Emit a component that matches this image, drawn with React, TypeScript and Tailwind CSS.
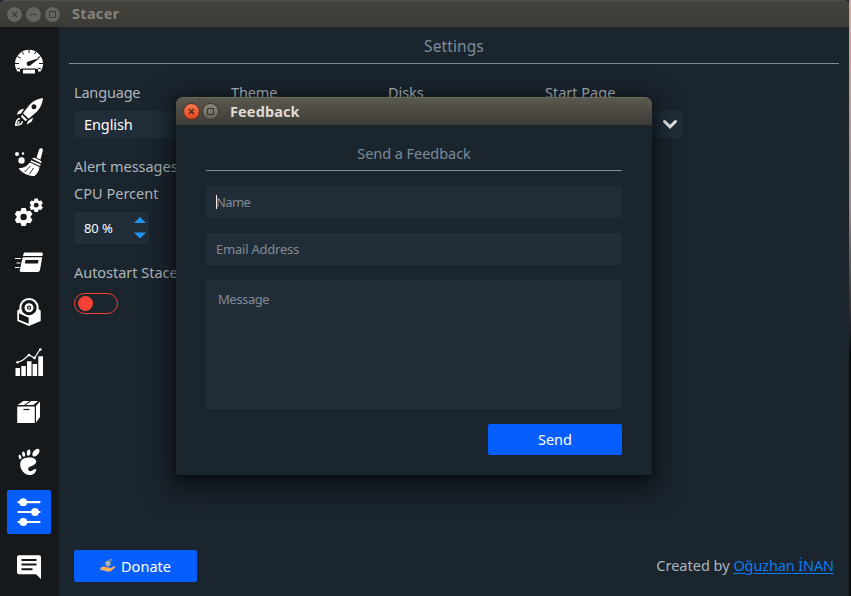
import type { ReactNode } from "react";

function Icon({ children }: { children: ReactNode }) {
  return (
    <svg viewBox="0 0 28 28" className="h-7 w-7" fill="#fff">
      {children}
    </svg>
  );
}

function Gear({ transform }: { transform: string }) {
  return (
    <g transform={transform}>
      {[0, 60, 120].map((a) => (
        <path key={a} transform={`rotate(${a})`} d="M-2.100-9h4.200l1 3v12l-1 3h-4.200l-1-3V-6z" />
      ))}
      <circle r="6.500" />
      <circle r="3.200" fill="#15191c" />
    </g>
  );
}

const icons: ReactNode[] = [
  <Icon>
    <path d="M5 23.500H2.500C.8 21 0 18.700 0 15.800a14 14 0 0 1 28 0c0 3-.8 5.200-2.500 7.700H23V21H5z" />
    <path d="M14 1v4M7 3.500l1.800 3M21 3.500l-1.500 2.500M2.500 8.300l3.200 1.900M25.500 8.300L23 9.800M0 15.500h4M28 15.500h-4M2 21l3-1M26 21l-3-1" stroke="#15191c" strokeWidth="1" />
    <path d="M25 9.700L15.800 17a2.300 2.300 0 1 1-2.400-3.600z" fill="#15191c" />
    <path d="M6.500 20.500h15v1h-15z" fill="#15191c" />
    <path d="M8 21.700h12v3.800H8z" />
  </Icon>,
  <Icon>
    <path fillRule="evenodd" d="M28 0c-.5 6-3 11-8 15.300l-6.300 5.400L8 15.200l5-6.500C17 3.500 22 .8 28 0zM19 6.300a2.500 2.500 0 1 0 0 5 2.500 2.500 0 0 0 0-5z" />
    <path d="M7 16.500l5.500 5.500-2.300 1L6 18.800zM9 11l-3 4.500-4 1.300c.8-3.500 3-6 7-5.800zM18 19.500l-1 3.700-4.800 3.200c-.3-1.600.4-3 1.500-4z" />
    <path d="M5 20.500c-3 .4-4.200 3-4.200 6.700 3.700 0 6.500-1 6.500-3.900M4.500 23.500l-2 2" fill="none" stroke="#fff" strokeWidth="1.500" />
  </Icon>,
  <Icon>
    <circle cx="2" cy="6" r="2" /><circle cx="8" cy="5.500" r="1.200" /><circle cx="6.500" cy="12.500" r="3.200" />
    <path d="M24.200 1.300c1-2 4-1.300 3.700 1L25.500 11.500l-4-1.700zM17.200 10.800c.8-1.300 1.700-1.300 2.800-.8l5.300 2.400c1.200.6 1.500 1.500.9 2.800zM16.200 12.200l9.600 4.400-.7 1.500-9.600-4.400zM14.800 14.600l9.700 4.500c-.5 4.200-2.300 6.900-5 8.900C13 28 7 25 3.500 20.200c4.500.3 8.300-1.700 11.300-5.600z" />
    <path d="M15.500 18l-6 6M18.500 20l-4 6" stroke="#15191c" strokeWidth=".9" />
  </Icon>,
  <Icon>
    <Gear transform="translate(8.600 19)" />
    <Gear transform="translate(21.200 7.200) scale(.75)" />
  </Icon>,
  <Icon>
    <path d="M10 4.500h16.500c1 0 1.500.8 1.300 1.700l-.4 1.800H8l.5-2c.2-1 .6-1.500 1.500-1.500z" />
    <path fillRule="evenodd" d="M7.700 9.300h19.500L25 22c-.3 1.200-1.200 2-2.500 2h-16c-1.300 0-2-.9-1.700-2zM10.500 12l-.7 3.500H23l.6-3.500z" />
    <path d="M0 10.500h6M1.500 15h4M0 19.500h4.500" stroke="#fff" strokeWidth="1.200" />
  </Icon>,
  <Icon>
    <path d="M2.300 12.500l2.700-1.700L14 18l9-7.200 2.700 1.700V23L14 28 2.300 23z" />
    <circle cx="14" cy="9.700" r="9.700" />
    <circle cx="14" cy="9.700" r="7.600" fill="#15191c" />
    <circle cx="14" cy="9.700" r="3.300" fill="none" stroke="#fff" strokeWidth="2.400" />
    <circle cx="14" cy="9.700" r=".9" />
    <path d="M4 15l9.700 4.200v6.500L4 21.700z" fill="#15191c" />
    <path d="M3 14.300l11 4.700 11-4.700" stroke="#fff" strokeWidth="1.200" fill="none" />
  </Icon>,
  <Icon>
    <path d="M.5 20H5v8H.5zM6.300 18h4.500v10H6.300zM12 13.300h4.500V28H12zM17.600 16h4.500v12h-4.500zM23.300 8.300H28V28h-4.700z" />
    <path d="M2.500 14.500L8 12l6-5 5.500 3L25 1.500" fill="none" stroke="#fff" strokeWidth="1.200" />
    <circle cx="2.500" cy="14.300" r="1.200" /><circle cx="14" cy="7" r="1.300" /><circle cx="19.500" cy="10" r="1.300" /><circle cx="25.300" cy="1.500" r="1.300" />
  </Icon>,
  <Icon>
    <path d="M8.500 3h6L9 7H2.500zM16.500 3h6.700l-5 4h-7.700zM2.200 8.500h17.600V25H2.200zM21 8l4-4.500V19l-4 5.500z" />
    <path d="M8.500 11.500h6" stroke="#15191c" strokeWidth="1.200" />
  </Icon>,
  <Icon>
    <path d="M21.500 1c4.700-1.200 3.800 5-1.500 7.500-4 .7-3.500-5 1.500-7.500z" />
    <ellipse cx="13.600" cy="4.700" rx="1.800" ry="3.100" transform="rotate(7 13.600 4.700)" />
    <ellipse cx="8.600" cy="6.200" rx="1.500" ry="2.700" transform="rotate(-12 8.600 6.200)" />
    <ellipse cx="5" cy="9" rx="1.300" ry="2.300" transform="rotate(-18 5 9)" />
    <path d="M13 9.500c6-.7 9.500 2 7.800 5.500-1.500 3-6.800 3-7.500 5.300-.7 3 2.700 4 5.200 1.200l3-.5c-.8 4.500-3.600 6-7 6C9 27 4.800 21 5.200 15.800c.3-3.800 3.100-5.900 7.800-6.300z" />
  </Icon>,
  <Icon>
    <path d="M3.500 4.200h21M3.500 14h21M3.500 24h21" stroke="#fff" strokeWidth="2.200" strokeLinecap="round" />
    <circle cx="8.300" cy="4.200" r="3.900" /><circle cx="20" cy="14" r="3.900" /><circle cx="8.300" cy="24" r="3.900" />
  </Icon>,
  <Icon>
    <path d="M4 2.300h20c1.300 0 2 .9 2 2.200v21.500L21 21.300H4c-1.200 0-2-.9-2-2v-15c0-1.300.8-2 2-2z" />
    <path d="M6.500 7H21.500M6.500 11.500H21.500M6.500 16.300H17.500" stroke="#15191c" strokeWidth="2" />
  </Icon>,
];

const columns = [
  { label: "Language", value: "English", track: "tracking-[-0.18px]" },
  { label: "Theme", value: "", track: "tracking-[-0.15px]" },
  { label: "Disks", value: "", track: "tracking-[-0.05px]" },
  { label: "Start Page", value: "", track: "tracking-[0px]" },
];

function WindowButton({ kind, tone }: { kind: "close" | "min" | "max"; tone: "dim" | "red" | "gray" }) {
  const colors = {
    dim: "border-[#383732] bg-[#65645e] text-[#3b3a35]",
    gray: "border-[#38352f] bg-linear-to-b from-[#8b8880] to-[#65625a] text-[#33312c]",
    red: "border-[#552d22] bg-linear-to-b from-[#f4764d] to-[#df481b] text-[#502214]",
  };
  return (
    <span className={`flex h-[17px] w-[17px] items-center justify-center rounded-full border ${colors[tone]}`}>
      <svg viewBox="0 0 11 11" className="h-[11px] w-[11px]" fill="none" stroke="currentColor">
        {kind === "close" && <path d="M3 3l5 5m0-5l-5 5" strokeWidth="1.200" />}
        {kind === "min" && <path d="M2 5.500h7" />}
        {kind === "max" && <path d="M2.500 2.500h6v6h-6z" />}
      </svg>
    </span>
  );
}

function FeedbackDialog() {
  return (
    <section className="absolute top-[97px] left-[176px] flex h-[378px] w-[476px] flex-col rounded-t-[7px] bg-[#1b252e] shadow-[0_8px_28px_6px_rgba(0,0,0,0.5),0_3px_10px_rgba(0,0,0,0.45)]">
      <header className="flex h-7 shrink-0 items-center gap-0.5 rounded-t-[7px] border-t border-[#6b685e] bg-linear-to-b from-[#5b584f] to-[#3e3c37] pl-[7px] text-[14.500px] font-bold text-[#dfdbd2]">
        <WindowButton kind="close" tone="red" />
        <WindowButton kind="max" tone="gray" />
        <h2 className="ml-[9px] pb-0.5 tracking-[0.12px]">Feedback</h2>
      </header>
      <div className="flex flex-1 flex-col px-[30px] text-[13px] text-[#818a92]">
        <h3 className="flex h-[46px] items-center justify-center border-b border-[#7c8ea0] pt-2.5 text-[14.500px] tracking-[-0.05px] text-[#7d8b9a]">Send a Feedback</h3>
        <div className="mt-[15px] flex h-8 items-center rounded-xs bg-[#212e3a] pl-2.5">
          <span className="h-[14px] w-px bg-[#eee]" />
          <span className="-ml-px tracking-[-0.6px]">Name</span>
        </div>
        <div className="mt-[15px] flex h-8 items-center rounded-xs bg-[#212e3a] pl-2.5 tracking-[-0.22px]">Email Address</div>
        <div className="mt-[15px] h-[129px] rounded-xs bg-[#212e3a] px-3 pt-[9px] tracking-[-0.42px]">Message</div>
        <button className="mt-[15px] h-[31px] w-[134px] self-end rounded-xs bg-[#075eff] pb-0.5 text-[14.500px] tracking-[0px] text-white">Send</button>
      </div>
    </section>
  );
}

export default function App() {
  return (
    <div className="relative flex h-[596px] w-[851px] overflow-hidden bg-[#11191f] font-['Noto_Sans',sans-serif] text-[14.500px] leading-5 text-[#aeb5bb]">
      <main className="flex w-[849px] flex-col bg-[#1b252e]">
        <header className="flex h-[27px] shrink-0 items-center gap-0.5 rounded-t-[5px] border-t border-[#504f49] bg-linear-to-b from-[#44433e] to-[#3b3a35] pl-1.5 text-[14.500px] font-bold text-[#85827b]">
          <WindowButton kind="close" tone="dim" />
          <WindowButton kind="min" tone="dim" />
          <WindowButton kind="max" tone="dim" />
          <h1 className="ml-[9px] pb-0.5 tracking-[0.3px]">Stacer</h1>
        </header>
        <div className="flex flex-1">
          <nav className="flex w-[59px] shrink-0 flex-col items-center gap-1.5 bg-[#15191c] pt-[13px] pr-px">
            {icons.map((icon, i) => (
              <button key={i} className={`flex h-11 w-11 shrink-0 items-center justify-center rounded-xs ${i === 9 ? "bg-[#075eff]" : ""} ${i === 10 ? "mt-[5px]" : ""}`}>
                {icon}
              </button>
            ))}
          </nav>
          <div className="flex flex-1 flex-col px-2.5">
            <h2 className="flex h-[37px] items-center justify-center border-b border-[#7c8ea0] pt-0.5 text-[15.500px] tracking-[0.1px] text-[#7d8b9a]">Settings</h2>
            <div className="flex flex-1 flex-col px-[5px] pt-[18px]">
              <div className="grid w-[608px] grid-cols-4 gap-5">
                {columns.map((c) => (
                  <label key={c.label} className="flex flex-col gap-[9px]">
                    <span className={c.track}>{c.label}</span>
                    <span className="flex h-[27px] items-center justify-between rounded-xs bg-[#212e3a] pr-1 pl-2.5 tracking-[-0.1px] text-white">
                      <span className="pb-0.5">{c.value}</span>
                      <svg viewBox="0 0 16 12" className="mb-0.5 h-3 w-4"><path d="M2.500 3.500L8 8.800l5.500-5.300" fill="none" stroke="#eee" strokeWidth="3" strokeLinecap="round" /></svg>
                    </span>
                  </label>
                ))}
              </div>
              <p className="mt-[18px] tracking-[-0.03px]">Alert messages</p>
              <p className="mt-[7px] tracking-[0.02px]">CPU Percent</p>
              <div className="mt-[9px] flex h-8 w-[75px] items-center justify-between rounded-xs bg-[#212e3a] pr-[3px] pl-2.5 text-[13px] tracking-[-0.1px] text-white">
                80 %
                <svg viewBox="0 0 12 22" className="h-[22px] w-3 fill-[#2196f3]"><path d="M6 0l6 6H0zM6 21.500l6-6H0z" /></svg>
              </div>
              <p className="mt-[18px] tracking-[-0.03px]">Autostart Stacer</p>
              <div className="mt-[11px] flex h-[21px] w-11 items-center rounded-full border border-[#f44336] pl-[3px]">
                <span className="h-[15px] w-[15px] rounded-full bg-[#f44336]" />
              </div>
              <footer className="mt-auto flex items-center justify-between pb-3.5">
                <button className="flex h-8 w-[123px] items-center justify-center gap-[5px] rounded-xs bg-[#075eff] text-white">
                  <svg viewBox="0 0 16 16" className="h-4 w-4">
                    <path d="M.5 9.500l3-1 4 .8 3 .7 3-1.500c2-.5 2.500.5 1 1.500L10.500 13.500H6l-2-1.200H.5z" fill="#f6ae58" />
                    <circle cx="8" cy="5.500" r="2.900" fill="#91a4ad" />
                    <path d="M9 1.500l3-.5-1 2.500" fill="#b3a571" /><path d="M8 4v3" stroke="#dbe4e7" />
                  </svg>
                  <span className="tracking-[0.02px]">Donate</span>
                </button>
                <p className="pb-0.5">Created by <a className="tracking-[-0.12px] text-[#087cf0] underline decoration-1 underline-offset-2">Oğuzhan İNAN</a></p>
              </footer>
            </div>
          </div>
        </div>
      </main>
      <div className="w-0.5 bg-linear-to-b from-[#dca697] via-[#a38176] via-35% to-[#080d11] to-60%" />
      <FeedbackDialog />
    </div>
  );
}
